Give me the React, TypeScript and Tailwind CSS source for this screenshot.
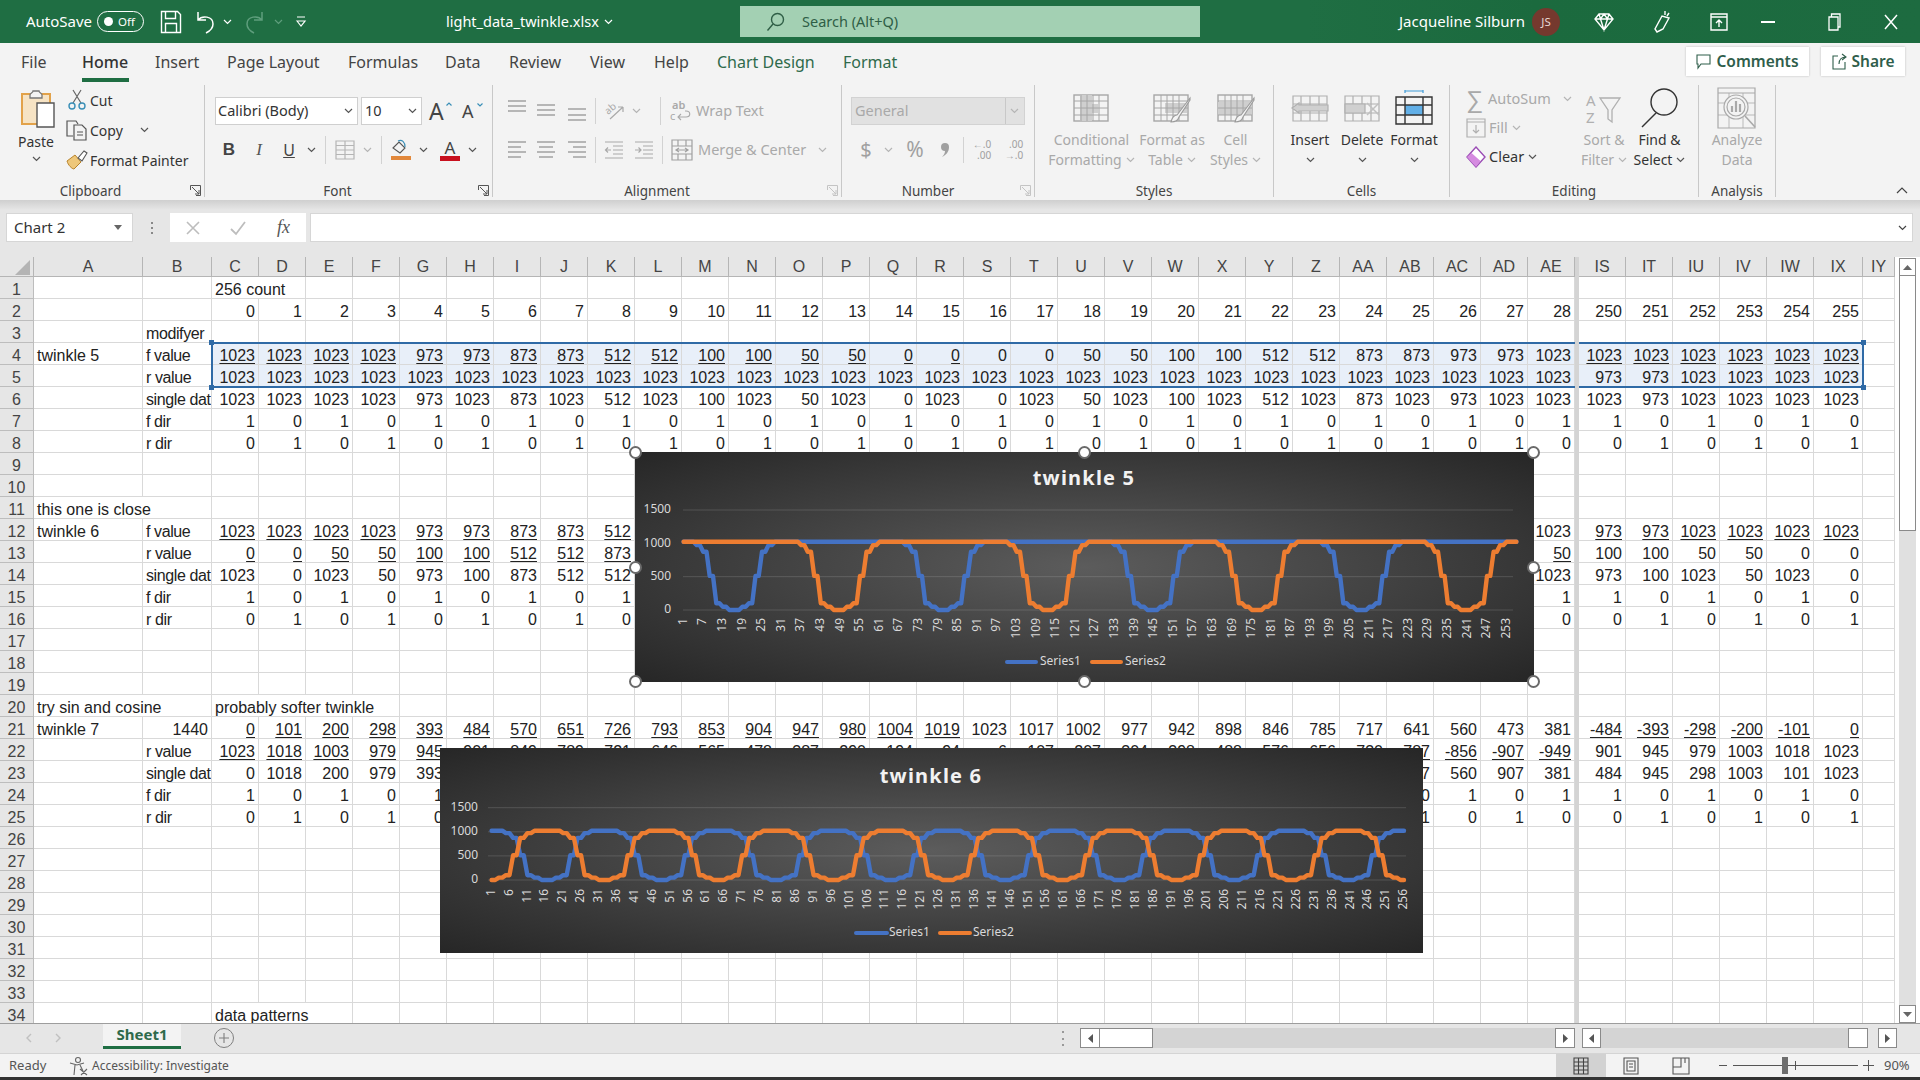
import React from "react";

const T64 = [973,973,873,873,512,512,100,100,50,50,0,0,0,0,50,50,100,100,512,512,873,873,973,973];
const f64 = (i: number) => { const t = ((i % 64) + 64) % 64; return t >= 4 && t < 28 ? T64[t - 4] : 1023; };
const f32 = (i: number) => { const t = ((i % 32) + 32) % 32; return t >= 4 && t < 28 ? T64[t - 4] : 1023; };
const range = (n: number) => Array.from({ length: n }, (_, i) => i);
const alt = (n: number, a: number) => range(n).map((i) => (i % 2 === 0 ? a : 1 - a));

const sin7 = [0,101,200,298,393,484,570,651,726,793,853,904,947,980,1004,1019,1023,1017,1002,977,942,898,846,785,717,641,560,473,381];
const cos7 = [1023,1018,1003,979,945,901,849,789,721,646,565,478,387,290,194,94,6,-107,-207,-304,-398,-488,-576,-656,-730,-787,-856,-907,-949];

type Row = {
  a?: string; aSpan?: boolean; b?: string; bRight?: boolean;
  text?: string; textSpan?: number;
  main?: (number | string)[]; right?: (number | string)[];
  ul?: (i: number) => boolean; ulR?: boolean; sel?: boolean;
};

const rowsData: Record<number, Row> = {
  1: { text: "256 count", textSpan: 2 },
  2: { main: range(29), right: [250,251,252,253,254,255] },
  3: { b: "modifyer" },
  4: { a: "twinkle 5", b: "f value", main: range(29).map(f64), right: [1023,1023,1023,1023,1023,1023], ul: (i) => i <= 15, ulR: true, sel: true },
  5: { b: "r value", main: range(29).map(() => 1023), right: [973,973,1023,1023,1023,1023], sel: true },
  6: { b: "single dat", main: range(29).map((i) => (i % 2 ? 1023 : f64(i))), right: [1023,973,1023,1023,1023,1023] },
  7: { b: "f dir", main: alt(29, 1), right: [1,0,1,0,1,0] },
  8: { b: "r dir", main: alt(29, 0), right: [0,1,0,1,0,1] },
  11: { a: "this one is close", aSpan: true },
  12: { a: "twinkle 6", b: "f value", main: range(29).map(f32), right: [973,973,1023,1023,1023,1023], ul: (i) => i < 28, ulR: true },
  13: { b: "r value", main: range(29).map((i) => f32(i + 16)), right: [100,100,50,50,0,0], ul: () => true },
  14: { b: "single dat", main: range(29).map((i) => (i % 2 ? f32(i + 16) : f32(i))), right: [973,100,1023,50,1023,0] },
  15: { b: "f dir", main: alt(29, 1), right: [1,0,1,0,1,0] },
  16: { b: "r dir", main: alt(29, 0), right: [0,1,0,1,0,1] },
  20: { a: "try sin and cosine", aSpan: true, text: "probably softer twinkle", textSpan: 4 },
  21: { a: "twinkle 7", b: "1440", bRight: true, main: sin7, right: [-484,-393,-298,-200,-101,0], ul: (i) => i <= 15, ulR: true },
  22: { b: "r value", main: cos7, right: [901,945,979,1003,1018,1023], ul: (i) => i <= 4 || i >= 25 },
  23: { b: "single dat", main: range(29).map((i) => (i % 2 ? Math.abs(cos7[i]) : sin7[i])), right: [484,945,298,1003,101,1023] },
  24: { b: "f dir", main: alt(29, 1), right: [1,0,1,0,1,0] },
  25: { b: "r dir", main: alt(29, 0), right: [0,1,0,1,0,1] },
  34: { text: "data patterns", textSpan: 3 },
};
const COLS = ["C","D","E","F","G","H","I","J","K","L","M","N","O","P","Q","R","S","T","U","V","W","X","Y","Z","AA","AB","AC","AD","AE"];
const RCOLS = ["IS","IT","IU","IV","IW","IX"];

const cellBase = "h-[22px] shrink-0 border-r border-b border-[#d9d9d9] flex items-center overflow-hidden whitespace-nowrap pt-[4px]";

function NumCell({ v, ul, sel, wide }: { v?: number | string; ul?: boolean; sel?: boolean; wide?: boolean }) {
  return (
    <div className={`${cellBase} ${wide ? "w-[49px]" : "w-[47px]"} justify-end pr-[3px] ${sel ? "bg-[#e8eff9]" : ""}`}>
      <span className={ul ? "underline underline-offset-[2px]" : ""}>{v}</span>
    </div>
  );
}

function SheetRow({ n }: { n: number }) {
  const r = rowsData[n] || {};
  const span = r.textSpan || 0;
  return (
    <div className="flex h-[22px]">
      <div className="w-[34px] h-[22px] shrink-0 bg-[#e6e6e6] border-r border-b border-[#bdbdbd] flex items-center justify-center text-[#444] pt-[4px] overflow-hidden">{n}</div>
      {r.aSpan ? (
        <div className={`${cellBase} w-[178px] pl-[3px]`}>{r.a}</div>
      ) : (
        <>
          <div className={`${cellBase} w-[109px] pl-[3px]`}>{r.a}</div>
          <div className={`${cellBase} w-[69px] ${r.bRight ? "justify-end pr-[3px]" : "pl-[3px] tracking-[-0.4px]"}`}>{r.b}</div>
        </>
      )}
      {span > 0 && (
        <div className={`${cellBase} pl-[3px] ${span === 2 ? "w-[94px]" : span === 3 ? "w-[141px]" : "w-[188px]"}`}>{r.text}</div>
      )}
      {COLS.slice(span).map((c, idx) => {
        const i = idx + span;
        return <NumCell key={c} v={r.main ? r.main[i] : undefined} ul={r.ul ? r.ul(i) : false} sel={r.sel} />;
      })}
      <div className="w-[4px] h-[22px] shrink-0 bg-[#d4d4d4]" />
      {RCOLS.map((c, i) => (
        <NumCell key={c} v={r.right ? r.right[i] : undefined} ul={r.ulR} sel={r.sel} wide={i === 5} />
      ))}
      <div className={`${cellBase} w-[32px]`} />
    </div>
  );
}

function HeadCell({ t, w }: { t: string; w: string }) {
  return <div className={`h-[20px] shrink-0 ${w} bg-[#e6e6e6] border-r border-b border-[#b5b5b5] flex items-center justify-center text-[#444]`}>{t}</div>;
}

function ChartBox({ title, w, h, x0, dx, y0, k, every, gridA, gridB, yLab, tickTop, titleX, titleY, legY, leg, s1, s2 }: {
  title: string; w: number; h: number; x0: number; dx: number; y0: number; k: number; every: number; gridA: number; gridB: number;
  yLab: number; tickTop: number; titleX: number; titleY: number; legY: number; leg: number[]; s1: (i: number) => number; s2: (i: number) => number;
}) {
  const pts = (f: (i: number) => number) => range(256).map((i) => `${(x0 + dx * i).toFixed(1)},${(y0 - f(i) * k).toFixed(1)}`).join(" ");
  const labels = range(256).filter((i) => i % every === 0);
  return (
    <svg width={w} height={h} viewBox={`0 0 ${w} ${h}`} className="block">
      <text x={titleX} y={titleY} fontFamily="Noto Sans" fontWeight={700} fontSize={20} letterSpacing={1.2} fill="#f2f2f2" textAnchor="middle" dominantBaseline="middle">{title}</text>
      {[0, 500, 1000, 1500].map((v) => (
        <g key={v}>
          <line x1={gridA} x2={gridB} y1={y0 - v * k} y2={y0 - v * k} stroke="#d9d9d9" strokeOpacity={0.18} strokeWidth={1} />
          <text x={yLab} y={y0 - v * k} fontFamily="Noto Sans" fontSize={12} fill="#d9d9d9" textAnchor="end" dominantBaseline="middle">{v}</text>
        </g>
      ))}
      {labels.map((i) => (
        <text key={i} transform={`translate(${x0 + dx * i},${tickTop}) rotate(-90)`} fontFamily="Noto Sans" fontSize={12} fill="#d9d9d9" textAnchor="end" dominantBaseline="middle">{i + 1}</text>
      ))}
      <polyline points={pts(s1)} fill="none" stroke="#4472c4" strokeWidth={4.4} strokeLinejoin="round" strokeLinecap="round" />
      <polyline points={pts(s2)} fill="none" stroke="#ed7d31" strokeWidth={4.4} strokeLinejoin="round" strokeLinecap="round" />
      <line x1={leg[0]} x2={leg[1]} y1={legY} y2={legY} stroke="#4472c4" strokeWidth={4} strokeLinecap="round" />
      <text x={leg[2]} y={legY} fontFamily="Noto Sans" fontSize={12} fill="#d9d9d9" dominantBaseline="middle">Series1</text>
      <line x1={leg[3]} x2={leg[4]} y1={legY} y2={legY} stroke="#ed7d31" strokeWidth={4} strokeLinecap="round" />
      <text x={leg[5]} y={legY} fontFamily="Noto Sans" fontSize={12} fill="#d9d9d9" dominantBaseline="middle">Series2</text>
    </svg>
  );
}

const Chev = ({ c = "#555" }: { c?: string }) => (
  <svg width="9" height="6" viewBox="0 0 9 6" className="shrink-0"><path d="M1 1l3.5 3.5L8 1" fill="none" stroke={c} strokeWidth="1.2" /></svg>
);
const GCHEV = "#b5b5b5";
const Launcher = ({ c = "#666" }: { c?: string }) => (
  <svg width="11" height="11" viewBox="0 0 11 11"><path d="M.5 5V.5H10.5V10.5H6M2 2l7 7M9 5v4H5" fill="none" stroke={c} strokeWidth="1" /></svg>
);
const Sep = ({ cls }: { cls: string }) => <div className={`w-px bg-[#d2d2d2] shrink-0 ${cls}`} />;
const Lines = ({ ys, xs, c = "#9b9b9b" }: { ys: number[]; xs: [number, number][]; c?: string }) => (
  <svg width="20" height="28" viewBox="0 0 20 28">
    {ys.map((y, i) => <line key={i} x1={xs[i][0]} x2={xs[i][1]} y1={y} y2={y} stroke={c} strokeWidth="1.4" />)}
  </svg>
);
const Box = ({ w, children }: { w: string; children?: React.ReactNode }) => (
  <div className={`${w} h-[28px] shrink-0 flex items-center justify-center`}>{children}</div>
);

function Group({ w, label, launcher, labelCls = "", children }: { w: string; label?: string; launcher?: string; labelCls?: string; children?: React.ReactNode }) {
  return (
    <div className={`${w} h-[112px] shrink-0 border-r border-[#c8c8c8] flex flex-col relative`}>
      <div className="h-[93px] shrink-0 flex">{children}</div>
      <div className={`h-[19px] shrink-0 flex items-center justify-center pt-[6px] text-[13.5px] leading-[18px] text-[#444] ${labelCls}`}>{label}</div>
      {launcher && (
        <div className="absolute right-[3px] bottom-[1px]"><Launcher c={launcher} /></div>
      )}
    </div>
  );
}

function GridIcon({ fill, kind }: { fill: string; kind: number }) {
  const s = "#a6a6a6";
  return (
    <svg width="38" height="30" viewBox="0 0 38 30">
      <rect x="1" y="2" width="34" height="26" fill="none" stroke={s} strokeWidth="1.4" />
      {kind === 0 && <path d="M7 2h12v9h6v9h-6v8H7z" fill={fill} />}
      {kind === 1 && <path d="M12 10h22v10H12z" fill={fill} />}
      {kind === 2 && <path d="M1 9h34v13H1z" fill={fill} />}
      {[8, 14, 20, 26].map((x) => <line key={x} x1={x} x2={x} y1="2" y2="28" stroke={s} strokeWidth="1" />)}
      {[8, 15, 22].map((y) => <line key={y} x1="1" x2="35" y1={y} y2={y} stroke={s} strokeWidth="1" />)}
      {kind !== 0 && <path d="M37 5L24 22c-3 0-5 3-6 7 4 0 7-1 8-5L37 7z" fill="#f3f3f3" stroke="#9b9b9b" strokeWidth="1.1" />}
    </svg>
  );
}

function BigBtn({ w, icon, lines, chev, c }: { w: string; icon: React.ReactNode; lines: string[]; chev?: boolean; c: string }) {
  return (
    <div className={`${w} shrink-0 flex flex-col items-center`}>
      <div className="h-[45px] flex items-center justify-center">{icon}</div>
      {lines.map((l, i) => (
        <div key={l} className={`h-[20px] leading-[20px] text-[14px] whitespace-nowrap flex items-center gap-[4px] ${c}`}>
          {l}{i === lines.length - 1 && chev && <Chev c={GCHEV} />}
        </div>
      ))}
      {lines.length === 1 && <div className="h-[20px] flex items-center"><Chev /></div>}
    </div>
  );
}

function Handle({ cls }: { cls: string }) {
  return <div className={`absolute w-[13px] h-[13px] rounded-full bg-white border-2 border-[#6a6a6a] ${cls}`} />;
}

export default function App() {
  return (
    <div className="w-[1920px] h-[1080px] overflow-hidden flex flex-col bg-white font-['Noto_Sans',sans-serif] text-[#333]">
      {/* Title bar */}
      <div className="h-[43px] shrink-0 bg-[linear-gradient(90deg,#1f6e43_68%,#1b6a3e_80%,#1d6b40_100%)] flex items-center text-white">
        <span className="ml-[26px] w-[71px] shrink-0 text-[15px] whitespace-nowrap">AutoSave</span>
        <div className="w-[47px] h-[21px] shrink-0 rounded-full border border-white flex items-center pl-[6px] gap-[5px]">
          <span className="w-[9px] h-[9px] rounded-full bg-white" />
          <span className="text-[11.5px]">Off</span>
        </div>
        <svg className="ml-[16px] shrink-0" width="22" height="24" viewBox="0 0 22 24" fill="none" stroke="#fff" strokeWidth="1.4"><path d="M1.5 1.5h16l3 3v18h-19zM5.5 1.5v7h10v-7M5.5 22.5v-9h11v9" /></svg>
        <svg className="ml-[14px] shrink-0" width="20" height="24" viewBox="0 0 20 24" fill="none" stroke="#fff" strokeWidth="1.5"><path d="M2 2v8h8M2 10c4-5 15-4 15 4 0 4-3 7-7 9" /></svg>
        <span className="ml-[7px] shrink-0"><Chev c="#fff" /></span>
        <svg className="ml-[12px] shrink-0" width="20" height="24" viewBox="0 0 20 24" fill="none" stroke="#5f9e7d" strokeWidth="1.5"><path d="M18 2v8h-8M18 10C14 5 3 6 3 14c0 4 3 7 7 9" /></svg>
        <span className="ml-[10px] shrink-0"><Chev c="#5f9e7d" /></span>
        <svg className="ml-[12px] shrink-0" width="12" height="14" viewBox="0 0 12 14" fill="none" stroke="#fff" strokeWidth="1.2"><path d="M2 2h8M2 6l4 5 4-5z" /></svg>
        <span className="ml-[139px] w-[158px] shrink-0 text-[14.5px] whitespace-nowrap">light_data_twinkle.xlsx</span>
        <Chev c="#fff" />
        <div className="ml-[127px] w-[460px] h-[31px] shrink-0 bg-[#a3d0b3] flex items-center pl-[26px] gap-[17px] text-[#2f5e46] text-[14.5px]">
          <svg width="19" height="20" viewBox="0 0 19 20" fill="none" stroke="#2f5e46" strokeWidth="1.4"><circle cx="11.5" cy="7.5" r="6" /><path d="M7 12L1.5 18.5" /></svg>
          Search (Alt+Q)
        </div>
        <span className="ml-[199px] w-[133px] shrink-0 text-[15px] whitespace-nowrap">Jacqueline Silburn</span>
        <div className="w-[28px] h-[28px] shrink-0 rounded-full bg-[#75392e] flex items-center justify-center text-[11.5px] text-[#e9d8d4]">JS</div>
        <svg className="ml-[34px] shrink-0" width="20" height="20" viewBox="0 0 20 20" fill="none" stroke="#fff" strokeWidth="1.4"><path d="M5 2h10l4 5-9 11L1 7zM1 7h18M6.500 7L10 18l3.500-11M5 2l1.500 5L10 2l3.500 5L15 2" /></svg>
        <svg className="ml-[39px] shrink-0" width="18" height="24" viewBox="0 0 18 24" fill="none" stroke="#fff" strokeWidth="1.4"><path d="M9 6L2 19l2 3 6-3 6-11zM12 1v4M16 3l-2 3" /></svg>
        <svg className="ml-[39px] shrink-0" width="18" height="18" viewBox="0 0 18 18" fill="none" stroke="#fff" strokeWidth="1.4"><path d="M1 1h16v16H1zM1 4h16M9 14V7M6 10l3-3 3 3" /></svg>
        <div className="ml-[33px] w-[14px] h-[2px] shrink-0 bg-white" />
        <svg className="ml-[53px] shrink-0" width="13" height="20" viewBox="0 0 13 20" fill="none" stroke="#fff" strokeWidth="1.3"><path d="M1 5h9v13H1zM3.500 5V2H12v13h-2" /></svg>
        <svg className="ml-[43px] shrink-0" width="14" height="16" viewBox="0 0 14 16" stroke="#fff" strokeWidth="1.5"><path d="M1 1l12 14M13 1L1 15" /></svg>
      </div>

      {/* Tabs */}
      <div className="h-[39px] shrink-0 bg-[#f3f3f3] flex items-center pl-[21px] pb-[2px] text-[16px] text-[#444]">
        <span className="w-[61px]">File</span>
        <span className="w-[73px] relative font-medium text-[#333]">Home<span className="absolute left-0 w-[47px] top-[28px] h-[4px] bg-[#1f6e43]" /></span>
        <span className="w-[72px]">Insert</span>
        <span className="w-[121px]">Page Layout</span>
        <span className="w-[97px]">Formulas</span>
        <span className="w-[64px]">Data</span>
        <span className="w-[81px]">Review</span>
        <span className="w-[64px]">View</span>
        <span className="w-[63px]">Help</span>
        <span className="w-[126px] text-[#2f6a4b]">Chart Design</span>
        <span className="text-[#2f6a4b]">Format</span>
        <div className="ml-auto flex gap-[12px] mr-[15px] text-[15.5px] font-semibold text-[#2f5e4b]">
          <div className="w-[123px] h-[29px] bg-white shadow-[0_0_2px_#bbb] flex items-center justify-center gap-[5px]">
            <svg width="15" height="16" viewBox="0 0 15 16" fill="none" stroke="#2f5e4b" strokeWidth="1.1"><path d="M1 1h13v9H5l-3 4v-4H1z" /></svg>Comments
          </div>
          <div className="w-[84px] h-[29px] bg-white shadow-[0_0_2px_#bbb] flex items-center justify-center gap-[5px]">
            <svg width="15" height="17" viewBox="0 0 15 17" fill="none" stroke="#2f5e4b" strokeWidth="1.1"><path d="M6 3H1v13h12v-7M7 11c0-5 3-7 7-7M10 1l4 3-4 3" /></svg>Share
          </div>
        </div>
      </div>

      {/* Ribbon */}
      <div className="h-[118px] shrink-0 bg-[#f3f3f3] pt-[3px] flex">
        <Group w="w-[205px]" label="Clipboard" launcher="#555" labelCls="pr-[23px]">
          <div className="w-[66px] shrink-0 pl-[6px] flex flex-col items-center pt-[3px]">
            <svg className="ml-[4px]" width="36" height="40" viewBox="0 0 36 40" fill="none">
              <path d="M2 6h28v30H2z" fill="#f6e3c4" stroke="#e2a24a" strokeWidth="2" />
              <path d="M10 7c0-2 3-2 3-4h6c0 2 3 2 3 4v3H10z" fill="#f3f3f3" stroke="#777" strokeWidth="1.3" />
              <path d="M17 15h17v24H17z" fill="#fff" stroke="#555" strokeWidth="1.4" />
            </svg>
            <div className="mt-[4px] text-[14px] leading-[20px]">Paste</div>
            <div className="mt-[4px]"><Chev /></div>
          </div>
          <div className="flex flex-col text-[14px]">
            <div className="h-[30px] flex items-center">
              <svg width="24" height="22" viewBox="0 0 24 22" fill="none"><path d="M7 1l8 13M15 1L7 14" stroke="#666" strokeWidth="1.2" /><circle cx="6" cy="17" r="3" stroke="#3a8fb7" strokeWidth="1.4" /><circle cx="16" cy="17" r="3" stroke="#3a8fb7" strokeWidth="1.4" /></svg>
              <span>Cut</span>
            </div>
            <div className="h-[30px] flex items-center">
              <svg width="24" height="22" viewBox="0 0 24 22" fill="none" stroke="#555" strokeWidth="1.2"><path d="M7 17H1V2h9l2 3M8 6h8l4 4v11H8zM11 13h6M11 16h6" fill="#f3f3f3" /></svg>
              <span>Copy</span><span className="ml-[17px]"><Chev /></span>
            </div>
            <div className="h-[30px] flex items-center">
              <svg width="24" height="20" viewBox="0 0 24 20" fill="none"><path d="M1 11l8-6 6 7-7 7c-2 0-6-4-7-8z" fill="#eec77a" stroke="#b8832b" strokeWidth="1" /><path d="M12 8l6-7 3 2-5 8z" fill="#fff" stroke="#555" strokeWidth="1.1" /></svg>
              <span className="whitespace-nowrap">Format Painter</span>
            </div>
          </div>
        </Group>

        <Group w="w-[288px]" label="Font" launcher="#555" labelCls="pr-[22px]">
          <div className="pl-[10px] pt-[12px] flex flex-col">
            <div className="flex h-[28px] items-center text-[14.5px]">
              <div className="w-[143px] h-[28px] bg-white border border-[#cfcfcf] flex items-center justify-between pl-[2px] pr-[4px]">Calibri (Body)<Chev /></div>
              <div className="w-[61px] ml-[3px] h-[28px] bg-white border border-[#cfcfcf] flex items-center justify-between pl-[3px] pr-[4px]">10<Chev /></div>
              <div className="ml-[7px] w-[20px] relative text-[23px] text-[#444] leading-none">A<svg className="absolute -right-[3px] top-[2px]" width="6" height="4" viewBox="0 0 6 4"><path d="M.5 3.500L3 1l2.500 2.500" fill="none" stroke="#3a8fb7" strokeWidth="1.2" /></svg></div>
              <div className="ml-[13px] w-[18px] relative text-[18px] text-[#444] leading-none">A<svg className="absolute -right-[3px] top-[1px]" width="6" height="4" viewBox="0 0 6 4"><path d="M.5.500L3 3l2.500-2.500" fill="none" stroke="#3a8fb7" strokeWidth="1.2" /></svg></div>
            </div>
            <div className="flex h-[28px] items-center mt-[11px]">
              <Box w="w-[28px]"><span className="font-bold text-[17px] text-[#444] font-['Liberation_Sans',sans-serif]">B</span></Box>
              <div className="w-[2px]" />
              <Box w="w-[28px]"><span className="italic text-[17px] text-[#555] font-['Liberation_Serif',serif]">I</span></Box>
              <div className="w-[2px]" />
              <Box w="w-[28px]"><span className="underline text-[16px] text-[#444]">U</span></Box>
              <Box w="w-[16px]"><Chev /></Box>
              <div className="w-[6px]" /><Sep cls="h-[28px]" /><div className="w-[5px]" />
              <Box w="w-[28px]">
                <svg width="20" height="20" viewBox="0 0 20 20" fill="none" stroke="#b5b5b5" strokeWidth="1.2"><path d="M1 1h18v18H1zM1 10h18M10 1v18M1 5.500h18M1 14.500h18" /></svg>
              </Box>
              <Box w="w-[16px]"><Chev c={GCHEV} /></Box>
              <div className="w-[6px]" /><Sep cls="h-[28px]" /><div className="w-[5px]" />
              <Box w="w-[28px]">
                <svg width="22" height="22" viewBox="0 0 22 22" fill="none"><path d="M3 9l6-6 6 6-5 5z" stroke="#555" strokeWidth="1.1" /><path d="M8 2c4-2 7 1 7 6" stroke="#3a8fb7" strokeWidth="1.2" /><rect x="1" y="17" width="20" height="4" fill="#e2883b" /></svg>
              </Box>
              <Box w="w-[16px]"><Chev /></Box>
              <div className="w-[5px]" />
              <Box w="w-[28px]">
                <div className="flex flex-col items-center"><span className="text-[17px] leading-[17px] text-[#444]">A</span><span className="w-[20px] h-[5px] bg-[#c8101e]" /></div>
              </Box>
              <Box w="w-[16px]"><Chev /></Box>
            </div>
          </div>
        </Group>

        <Group w="w-[349px]" label="Alignment" launcher="#c4c4c4" labelCls="pr-[20px]">
          <div className="pl-[10px] pt-[12px] flex flex-col">
            <div className="flex h-[28px] items-center">
              <Box w="w-[28px]"><Lines ys={[4, 9, 14]} xs={[[1,19],[1,19],[1,19]]} /></Box>
              <div className="w-px" />
              <Box w="w-[28px]"><Lines ys={[8, 13, 18]} xs={[[1,19],[1,19],[1,19]]} /></Box>
              <div className="w-[3px]" />
              <Box w="w-[28px]"><Lines ys={[12, 18, 23]} xs={[[1,19],[1,19],[1,19]]} /></Box>
              <div className="w-[4px]" /><Sep cls="h-[26px]" /><div className="w-[4px]" />
              <Box w="w-[28px]">
                <svg className="overflow-visible" width="22" height="24" viewBox="0 0 22 24" fill="none" stroke="#a9a9a9" strokeWidth="1.2"><path d="M7 20L20 8M20 8h-5M20 8v5" /><text x="1" y="13" fontSize="10" stroke="none" fill="#a9a9a9" transform="rotate(-40 7 9)">ab</text></svg>
              </Box>
              <Box w="w-[16px]"><Chev c={GCHEV} /></Box>
              <div className="w-[16px]" /><Sep cls="h-[28px]" /><div className="w-[8px]" />
              <svg className="shrink-0 overflow-visible" width="26" height="24" viewBox="0 0 26 24" fill="none"><text x="3" y="10" fontSize="11" fontWeight="600" fill="#a9a9a9">ab</text><text x="1" y="21" fontSize="11" fill="#a9a9a9">c</text><path d="M9 18h8c5 0 5-6 0-6h-1M12 15l-3 3 3 3" stroke="#a9a9a9" strokeWidth="1.1" /></svg>
              <span className="text-[14.5px] text-[#a9a9a9] whitespace-nowrap ml-[1px]">Wrap Text</span>
            </div>
            <div className="flex h-[28px] items-center mt-[11px]">
              <Box w="w-[28px]"><Lines ys={[6, 11, 16, 21]} xs={[[1,19],[1,14],[1,19],[1,14]]} /></Box>
              <div className="w-px" />
              <Box w="w-[28px]"><Lines ys={[6, 11, 16, 21]} xs={[[1,19],[3,17],[1,19],[3,17]]} /></Box>
              <div className="w-[3px]" />
              <Box w="w-[28px]"><Lines ys={[6, 11, 16, 21]} xs={[[1,19],[6,19],[1,19],[6,19]]} /></Box>
              <div className="w-[4px]" /><Sep cls="h-[26px]" /><div className="w-[4px]" />
              <Box w="w-[28px]">
                <svg width="20" height="20" viewBox="0 0 20 20" fill="none" stroke="#a9a9a9" strokeWidth="1.2"><path d="M1 2h18M9 6h10M9 10h10M9 14h10M1 18h18M7 10H2M4 7.500L1.500 10 4 12.500" /></svg>
              </Box>
              <div className="w-[2px]" />
              <Box w="w-[28px]">
                <svg width="20" height="20" viewBox="0 0 20 20" fill="none" stroke="#a9a9a9" strokeWidth="1.2"><path d="M1 2h18M9 6h10M9 10h10M9 14h10M1 18h18M1 10h6M4.500 7.500L7 10l-2.500 2.500" /></svg>
              </Box>
              <div className="w-[4px]" /><Sep cls="h-[28px]" /><div className="w-[8px]" />
              <svg className="shrink-0" width="22" height="22" viewBox="0 0 22 22" fill="none" stroke="#a0a0a0" strokeWidth="1.2"><path d="M1 1h20v20H1zM1 7h20M1 15h20M7 1v6M15 1v6M7 15v6M15 15v6M5 11h12M8 9l-3 2 3 2M14 9l3 2-3 2" /></svg>
              <span className="text-[14.5px] text-[#a9a9a9] whitespace-nowrap ml-[5px]">Merge &amp; Center</span>
              <span className="ml-[12px]"><Chev c={GCHEV} /></span>
            </div>
          </div>
        </Group>

        <Group w="w-[193px]" label="Number" launcher="#c4c4c4" labelCls="pr-[20px]">
          <div className="pl-[9px] pt-[12px] flex flex-col">
            <div className="w-[174px] h-[28px] bg-[#e1e1e1] border border-[#d2d2d2] flex items-center justify-between pl-[3px] pr-[5px] text-[14.5px] text-[#a9a9a9]">General<span className="border-l border-[#c8c8c8] h-[26px] pl-[4px] flex items-center"><Chev c={GCHEV} /></span></div>
            <div className="flex h-[28px] items-center mt-[11px] text-[#a0a0a0]">
              <Box w="w-[30px]"><span className="text-[20px]">$</span></Box>
              <Box w="w-[14px]"><Chev c={GCHEV} /></Box>
              <div className="w-[4px]" />
              <Box w="w-[32px]"><span className="text-[21px]">%</span></Box>
              <Box w="w-[28px]">
                <svg width="10" height="16" viewBox="0 0 10 16"><path d="M5 1a4 4 0 0 1 4 4c0 5-3 8-7 10 2-2 3-4 3-6a4 4 0 0 1 0-8z" fill="#a0a0a0" /></svg>
              </Box>
              <div className="w-[4px]" /><Sep cls="h-[26px]" /><div className="w-[2px]" />
              <Box w="w-[32px]"><div className="text-[10px] leading-[11px] text-right"><div>←.0</div><div>.00</div></div></Box>
              <Box w="w-[32px]"><div className="text-[10px] leading-[11px] text-right"><div>.00</div><div>→.0</div></div></Box>
            </div>
          </div>
        </Group>

        <Group w="w-[239px]" label="Styles">
          <div className="pl-[10px] flex">
            <BigBtn w="w-[93px]" c="text-[#a9a9a9]" chev lines={["Conditional", "Formatting"]} icon={<GridIcon kind={0} fill="#cfcfcf" />} />
            <BigBtn w="w-[68px]" c="text-[#a9a9a9]" chev lines={["Format as", "Table"]} icon={<GridIcon kind={1} fill="#cfcfcf" />} />
            <BigBtn w="w-[59px]" c="text-[#a9a9a9]" chev lines={["Cell", "Styles"]} icon={<GridIcon kind={2} fill="#cfcfcf" />} />
          </div>
        </Group>

        <Group w="w-[176px]" label="Cells">
          <div className="pl-[11px] flex">
            <BigBtn w="w-[50px]" c="text-[#333]" lines={["Insert"]} icon={
              <svg width="38" height="30" viewBox="0 0 38 30" fill="none" stroke="#b0b0b0" strokeWidth="1.2"><path d="M2 3h34v25H2zM2 11h34M2 20h34M10 3v25M19 3v25M28 3v25" /><path d="M1 15l7-5v2h29v6H8v2z" fill="#d0d0d0" /></svg>
            } />
            <BigBtn w="w-[54px]" c="text-[#333]" lines={["Delete"]} icon={
              <svg width="38" height="30" viewBox="0 0 38 30" fill="none" stroke="#b0b0b0" strokeWidth="1.2"><path d="M2 3h34v25H2zM2 11h34M2 20h34M10 3v25M19 3v25M28 3v25" /><path d="M2 11h20v9H2z" fill="#d0d0d0" /><path d="M24 10l12 12M36 10L24 22" stroke="#c0c0c0" strokeWidth="1.5" /></svg>
            } />
            <BigBtn w="w-[50px]" c="text-[#333]" lines={["Format"]} icon={
              <svg width="38" height="36" viewBox="0 0 38 36" fill="none"><path d="M10 1h18M10 0v3M28 0v3" stroke="#3f9bd8" strokeWidth="1.2" /><rect x="10" y="15" width="18" height="10" fill="#62b0e8" /><path d="M1 7h36v27H1zM1 15h36M1 25h36M10 7v27M28 7v27" stroke="#333" strokeWidth="1.4" /></svg>
            } />
          </div>
        </Group>

        <Group w="w-[249px]" label="Editing">
          <div className="w-[126px] pl-[16px] shrink-0 flex flex-col text-[14.5px]">
            <div className="h-[28px] flex items-center text-[#a9a9a9]"><span className="w-[22px] text-[24px] leading-none">∑</span>AutoSum<span className="ml-[12px]"><Chev c={GCHEV} /></span></div>
            <div className="h-[28px] mt-[1px] flex items-center text-[#a9a9a9]">
              <svg className="mr-[3px]" width="20" height="20" viewBox="0 0 20 20" fill="none" stroke="#b0b0b0" strokeWidth="1.2"><path d="M1 1h18v18H1zM1 4h18M10 7v8M7 12l3 3 3-3" /></svg>Fill<span className="ml-[4px]"><Chev c={GCHEV} /></span>
            </div>
            <div className="h-[28px] mt-[1px] flex items-center text-[#333]">
              <svg className="mr-[3px]" width="20" height="22" viewBox="0 0 20 22"><path d="M10 1l9 10-9 10L1 11z" fill="#fff" stroke="#9b4db5" strokeWidth="1.4" /><path d="M5.500 7L14.500 15 10 21 1 11z" fill="#d58be0" /></svg>Clear<span className="ml-[4px]"><Chev /></span>
            </div>
          </div>
          <div className="w-[56px] shrink-0 flex flex-col items-center text-[14px] text-[#a9a9a9]">
            <div className="h-[45px] flex items-center pt-[2px]">
              <svg className="overflow-visible" width="40" height="34" viewBox="0 0 40 34"><text x="2" y="14" fontSize="15" fill="#b0b0b0">A</text><text x="2" y="31" fontSize="15" fill="#b0b0b0">Z</text><path d="M16 6h20l-8 12v12l-4-3v-9z" fill="none" stroke="#b0b0b0" strokeWidth="1.3" /></svg>
            </div>
            <div className="h-[20px] leading-[20px] whitespace-nowrap">Sort &amp;</div>
            <div className="h-[20px] leading-[20px] whitespace-nowrap flex items-center gap-[4px]">Filter<Chev c={GCHEV} /></div>
          </div>
          <div className="w-[55px] shrink-0 flex flex-col items-center text-[14px] text-[#333]">
            <div className="h-[45px] flex items-center">
              <svg width="38" height="40" viewBox="0 0 38 40" fill="none" stroke="#333" strokeWidth="1.4"><circle cx="23" cy="14" r="13" /><path d="M15 25L1 39" /></svg>
            </div>
            <div className="h-[20px] leading-[20px] whitespace-nowrap">Find &amp;</div>
            <div className="h-[20px] leading-[20px] whitespace-nowrap flex items-center gap-[4px]">Select<Chev /></div>
          </div>
        </Group>

        <Group w="w-[77px]" label="Analysis">
          <div className="w-full flex flex-col items-center text-[14px] text-[#a9a9a9]">
            <div className="h-[45px] flex items-center">
              <svg width="42" height="42" viewBox="0 0 42 42" fill="none" stroke="#a9a9a9" strokeWidth="1.2"><path d="M2 1h37v40H2zM2 6h37" /><path d="M2 16h37M2 28h37M13 6v35M27 6v35" strokeWidth=".8" /><circle cx="20" cy="20" r="12" fill="#f3f3f3" /><circle cx="20" cy="20" r="9" /><path d="M16 25v-6M20 25V14M24 25v-8" strokeWidth="2.2" /><path d="M29 29l10 11" strokeWidth="1.6" /></svg>
            </div>
            <div className="h-[20px] leading-[20px]">Analyze</div>
            <div className="h-[20px] leading-[20px]">Data</div>
          </div>
        </Group>

        <div className="flex-1 flex justify-end items-end pr-[12px] pb-[6px]">
          <svg width="12" height="8" viewBox="0 0 12 8" fill="none" stroke="#444" strokeWidth="1.2"><path d="M1 7l5-5 5 5" /></svg>
        </div>
      </div>

      {/* Formula bar */}
      <div className="h-[57px] shrink-0 bg-[linear-gradient(#cfcfcf,#e6e6e6_10px)] pt-[13px] pl-[6px] flex items-start">
        <div className="w-[127px] h-[29px] bg-white border border-[#d6d6d6] flex items-center justify-between pl-[7px] pr-[10px] text-[15px]">Chart 2<svg width="8" height="5" viewBox="0 0 8 5"><path d="M0 0h8L4 5z" fill="#666" /></svg></div>
        <div className="w-[37px] h-[29px] flex flex-col items-center justify-center gap-[3px]">
          <span className="w-[2px] h-[2px] bg-[#888]" /><span className="w-[2px] h-[2px] bg-[#888]" /><span className="w-[2px] h-[2px] bg-[#888]" />
        </div>
        <div className="w-[136px] h-[29px] bg-white flex items-center pl-[15px]">
          <svg width="16" height="16" viewBox="0 0 16 16" stroke="#bdbdbd" strokeWidth="1.6"><path d="M2 2l12 12M14 2L2 14" /></svg>
          <svg className="ml-[28px]" width="18" height="16" viewBox="0 0 18 16" fill="none" stroke="#bdbdbd" strokeWidth="1.8"><path d="M2 9l5 5L16 2" /></svg>
          <span className="ml-[30px] text-[18px] italic font-['Liberation_Serif',serif] text-[#555]">fx</span>
        </div>
        <div className="ml-[4px] w-[1603px] h-[29px] bg-white border border-[#d6d6d6] flex items-center justify-end pr-[5px]">
          <Chev c="#444" />
        </div>
      </div>

      {/* Grid */}
      <div className="h-[766px] shrink-0 flex overflow-hidden font-['Liberation_Sans',sans-serif] text-[16px] text-[#222]">
        <div className="w-[1895px] shrink-0 relative overflow-hidden">
          <div className="flex h-[20px]">
            <div className="w-[34px] h-[20px] shrink-0 bg-[#e6e6e6] border-r border-b border-[#b5b5b5] flex items-end justify-end pr-[3px] pb-[1px]">
              <svg width="15" height="15" viewBox="0 0 15 15"><path d="M15 0v15H0z" fill="#b4b4b4" /></svg>
            </div>
            <HeadCell t="A" w="w-[109px]" />
            <HeadCell t="B" w="w-[69px]" />
            {COLS.map((c) => <HeadCell key={c} t={c} w="w-[47px]" />)}
            <div className="w-[4px] h-[20px] shrink-0 bg-[#d4d4d4]" />
            {RCOLS.slice(0, 5).map((c) => <HeadCell key={c} t={c} w="w-[47px]" />)}
            <HeadCell t="IX" w="w-[49px]" />
            <HeadCell t="IY" w="w-[32px]" />
          </div>
          {range(35).map((i) => <SheetRow key={i + 1} n={i + 1} />)}

          {/* Selection */}
          <div className="absolute left-[211px] top-[85px] w-[1364px] h-[46px] border-2 border-r-0 border-[#2f6aa6]" />
          <div className="absolute left-[1579px] top-[85px] w-[285px] h-[46px] border-2 border-l-0 border-[#2f6aa6]" />
          <div className="absolute left-[209px] top-[83px] w-[5px] h-[5px] bg-[#2f6aa6]" />
          <div className="absolute left-[209px] top-[128px] w-[5px] h-[5px] bg-[#2f6aa6]" />
          <div className="absolute left-[1861px] top-[83px] w-[5px] h-[5px] bg-[#2f6aa6]" />
          <div className="absolute left-[1861px] top-[128px] w-[5px] h-[5px] bg-[#2f6aa6]" />

          {/* Chart 2 (twinkle 6) */}
          <div className="absolute left-[440px] top-[491px] w-[983px] h-[205px] bg-[radial-gradient(ellipse_at_center,#5c5c5c_0%,#262626_100%)]">
            <ChartBox title="twinkle 6" w={983} h={205} x0={51.6} dx={3.578} y0={132} k={0.0482} every={5} gridA={48} gridB={966} yLab={38} tickTop={141} titleX={491} titleY={30} legY={185} leg={[416, 447, 449, 500, 530, 533]} s1={f32} s2={(i) => f32(i + 16)} />
          </div>

          {/* Chart 1 (twinkle 5) */}
          <div className="absolute left-[635px] top-[195px] w-[899px] h-[230px] bg-[radial-gradient(ellipse_at_center,#5c5c5c_0%,#262626_100%)]">
            <ChartBox title="twinkle 5" w={899} h={230} x0={48.6} dx={3.266} y0={158} k={1 / 15} every={6} gridA={48} gridB={878} yLab={36} tickTop={166} titleX={449} titleY={28} legY={210} leg={[372, 401, 405, 457, 486, 490]} s1={f64} s2={(i) => f64(i + 32)} />
            <Handle cls="-left-[6px] -top-[6px]" />
            <Handle cls="left-[443px] -top-[6px]" />
            <Handle cls="-right-[6px] -top-[6px]" />
            <Handle cls="-left-[6px] top-[109px]" />
            <Handle cls="-right-[6px] top-[109px]" />
            <Handle cls="-left-[6px] -bottom-[6px]" />
            <Handle cls="left-[443px] -bottom-[6px]" />
            <Handle cls="-right-[6px] -bottom-[6px]" />
          </div>
        </div>
        <div className="flex-1 pl-[4px] pr-[4px] pt-[1px] flex flex-col bg-white">
          <div className="h-[18px] bg-white border border-[#8a8a8a] flex items-center justify-center shrink-0">
            <svg width="9" height="5" viewBox="0 0 9 5"><path d="M0 5h9L4.500 0z" fill="#666" /></svg>
          </div>
          <div className="h-[255px] bg-white border-x border-b border-[#8a8a8a] shrink-0" />
          <div className="flex-1 bg-[#e0e0e0]" />
          <div className="h-[18px] bg-white border border-[#8a8a8a] flex items-center justify-center shrink-0">
            <svg width="9" height="5" viewBox="0 0 9 5"><path d="M0 0h9L4.500 5z" fill="#666" /></svg>
          </div>
        </div>
      </div>

      {/* Sheet tabs bar */}
      <div className="h-[30px] shrink-0 bg-[#e6e6e6] border-t border-[#9d9d9d] flex items-start">
        <svg className="ml-[26px] mt-[9px]" width="6" height="10" viewBox="0 0 6 10" fill="none" stroke="#c0c0c0" strokeWidth="1.4"><path d="M5 1L1 5l4 4" /></svg>
        <svg className="ml-[23px] mt-[9px]" width="6" height="10" viewBox="0 0 6 10" fill="none" stroke="#c0c0c0" strokeWidth="1.4"><path d="M1 1l4 4-4 4" /></svg>
        <div className="ml-[42px] w-[78px] h-[25px] bg-[#f3f3f3] border-b-[3px] border-[#1f6e43] flex items-center justify-center pb-[2px] text-[15px] font-bold text-[#2f6a4b]">Sheet1</div>
        <div className="ml-[33px] mt-[4px] w-[20px] h-[20px] rounded-full border border-[#7f7f7f] flex items-center justify-center">
          <svg width="12" height="12" viewBox="0 0 12 12" stroke="#7f7f7f" strokeWidth="1.1"><path d="M6 1v10M1 6h10" /></svg>
        </div>
        <div className="ml-[828px] mt-[7px] h-[15px] flex flex-col justify-between">
          <span className="block w-[2px] h-[2px] bg-[#999]" /><span className="block w-[2px] h-[2px] bg-[#999]" /><span className="block w-[2px] h-[2px] bg-[#999]" />
        </div>
        <div className="ml-[16px] mt-[4px] h-[20px] flex">
          <div className="w-[20px] bg-white border border-[#8a8a8a] flex items-center justify-center"><svg width="5" height="9" viewBox="0 0 5 9"><path d="M5 0v9L0 4.500z" fill="#555" /></svg></div>
          <div className="w-[53px] bg-white border-y border-r border-[#8a8a8a]" />
          <div className="w-[402px] bg-[#d4d4d4]" />
          <div className="w-[20px] bg-white border border-[#8a8a8a] flex items-center justify-center"><svg width="5" height="9" viewBox="0 0 5 9"><path d="M0 0v9l5-4.500z" fill="#555" /></svg></div>
          <div className="w-[7px]" />
          <div className="w-[19px] bg-white border border-[#8a8a8a] flex items-center justify-center"><svg width="5" height="9" viewBox="0 0 5 9"><path d="M5 0v9L0 4.500z" fill="#555" /></svg></div>
          <div className="w-[247px] bg-[#d4d4d4]" />
          <div className="w-[20px] bg-white border border-[#8a8a8a]" />
          <div className="w-[10px]" />
          <div className="w-[19px] bg-white border border-[#8a8a8a] flex items-center justify-center"><svg width="5" height="9" viewBox="0 0 5 9"><path d="M0 0v9l5-4.500z" fill="#555" /></svg></div>
        </div>
      </div>

      {/* Status bar */}
      <div className="h-[24px] shrink-0 bg-[#f3f3f3] border-t border-[#d4d4d4] flex items-center text-[12px] text-[#555]">
        <span className="ml-[9px] w-[60px] text-[13px]">Ready</span>
        <svg width="19" height="20" viewBox="0 0 19 20" fill="none" stroke="#666" strokeWidth="1.1"><circle cx="9" cy="4" r="2.500" /><path d="M1 7l7 2 7-2M6 9l-1 10M11 9l3 6M11 13l7 6M18 13l-6 6" /></svg>
        <span className="ml-[4px] whitespace-nowrap">Accessibility: Investigate</span>
        <div className="ml-auto flex items-center h-full">
          <div className="w-[50px] h-[24px] bg-[#d2d2d2] flex items-center justify-center">
            <svg width="16" height="18" viewBox="0 0 16 18" fill="none" stroke="#444" strokeWidth="1.1"><path d="M1 1h14v16H1zM1 5h14M1 9h14M1 13h14M5.500 1v16M10.500 1v16" /></svg>
          </div>
          <div className="w-[50px] flex justify-center">
            <svg width="16" height="18" viewBox="0 0 16 18" fill="none" stroke="#555" strokeWidth="1.1"><path d="M1 1h14v16H1zM4 4h8v10H4zM6 7h4M6 10h4" /></svg>
          </div>
          <div className="w-[50px] flex justify-center">
            <svg width="18" height="18" viewBox="0 0 18 18" fill="none" stroke="#555" strokeWidth="1.1"><path d="M1 1h16v16H1zM9 1v9H1M13 1v5" /></svg>
          </div>
          <div className="ml-[13px] w-[8px] h-px bg-[#555]" />
          <div className="ml-[6px] w-[125px] h-px bg-[#555] relative">
            <div className="absolute left-[49px] -top-[8px] w-[6px] h-[17px] bg-[#6e6e6e]" />
            <div className="absolute left-[62px] -top-[4px] w-px h-[9px] bg-[#555]" />
          </div>
          <svg className="ml-[5px]" width="11" height="11" viewBox="0 0 11 11" stroke="#555" strokeWidth="1"><path d="M5.500 0v11M0 5.500h11" /></svg>
          <span className="ml-[10px] mr-[10px] w-[26px] text-[13px] whitespace-nowrap">90%</span>
        </div>
      </div>
      <div className="flex-1 bg-[#333]" />
    </div>
  );
}
